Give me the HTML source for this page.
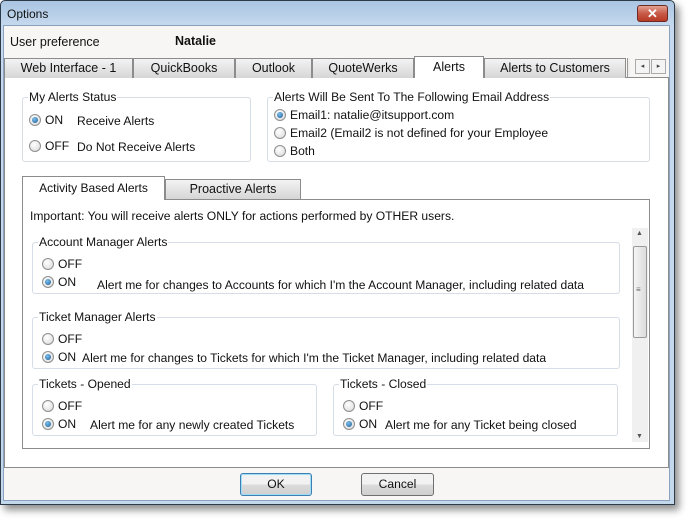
<!DOCTYPE html><html><head><style>
*{box-sizing:border-box}
body{margin:0;width:690px;height:521px;background:#fff;font-family:"Liberation Sans",sans-serif;font-size:12.1px;color:#111;position:relative;overflow:hidden}
.a{position:absolute}
.win{left:0;top:0;width:675px;height:505px;border:1px solid #2c3a4a;background:linear-gradient(#a9c4e2,#c6d9ee 25px,#c4d8ec);box-shadow:4px 5px 8px rgba(0,0,0,.45);border-radius:5px 5px 0 0}
.body{left:3px;top:25px;width:667px;height:476px;background:#f7f6f4;border:1px solid #8aa2bd}
.tab{position:absolute;height:20px;border:1px solid #8c8c8c;border-bottom:none;background:linear-gradient(#f3f3f3,#d6d6d6);text-align:center;line-height:19px;font-size:12.5px}
.panel{background:#fff;border:1px solid #8c8c8c}
.grp{position:absolute;border:1px solid #d5dde6;border-radius:3px}
.lg{position:absolute;top:-8px;left:5px;background:#fff;padding:0 1px;font-size:12.1px}
.r{position:absolute;width:12px;height:12px;border-radius:50%;border:1px solid #8e8f8f;background:radial-gradient(circle at 40% 35%,#fff,#d7d7d7)}
.r.on::after{content:"";position:absolute;left:2px;top:2px;width:6px;height:6px;border-radius:50%;background:radial-gradient(circle at 40% 35%,#7fc0ec,#165a94)}
.t{position:absolute;white-space:nowrap}
.btn{position:absolute;height:23px;border:1px solid #707070;border-radius:3px;background:linear-gradient(#f2f2f2 50%,#dcdcdc 50%,#cfcfcf);text-align:center;line-height:21px}
</style></head><body>
<div class="a win"></div>
<div class="t" style="left:7px;top:7px;font-size:12px">Options</div>
<div class="a" style="left:637px;top:5px;width:31px;height:17px;border:1px solid #6d2a22;border-radius:3px;background:linear-gradient(#e3a293,#c75a46 50%,#b83a26);color:#fff;text-align:center;font-weight:bold;line-height:15px;font-size:13px">✕</div>
<div class="a body"></div>
<div class="t" style="left:10px;top:35px;font-size:12.5px">User preference</div>
<div class="t" style="left:175px;top:34px;font-weight:bold;font-size:12.5px">Natalie</div>
<div class="a panel" style="left:4px;top:77px;width:665px;height:391px"></div>
<div class="tab" style="left:4px;top:58px;width:129px">Web Interface - 1</div>
<div class="tab" style="left:133px;top:58px;width:102px">QuickBooks</div>
<div class="tab" style="left:235px;top:58px;width:77px">Outlook</div>
<div class="tab" style="left:312px;top:58px;width:102px">QuoteWerks</div>
<div class="tab" style="left:414px;top:56px;width:70px;height:22px;background:#fff;line-height:20px">Alerts</div>
<div class="tab" style="left:484px;top:58px;width:142px">Alerts to Customers</div>
<div class="a" style="left:627px;top:58px;width:3px;height:19px;border-left:1px solid #999;background:#eee"></div>
<div class="a" style="left:635px;top:59px;width:15px;height:15px;border:1px solid #aaa;background:#f4f4f4;font-size:7px;text-align:center;line-height:13px;color:#444">◂</div>
<div class="a" style="left:651px;top:59px;width:15px;height:15px;border:1px solid #aaa;background:#f4f4f4;font-size:7px;text-align:center;line-height:13px;color:#444">▸</div>

<div class="grp" style="left:22px;top:97px;width:229px;height:65px"><span class="lg">My Alerts Status</span></div>
<div class="r on" style="left:29px;top:114px"></div><div class="t" style="left:45px;top:113px">ON</div><div class="t" style="left:77px;top:114px">Receive Alerts</div>
<div class="r" style="left:29px;top:140px"></div><div class="t" style="left:45px;top:139px">OFF</div><div class="t" style="left:77px;top:140px">Do Not Receive Alerts</div>

<div class="grp" style="left:267px;top:97px;width:383px;height:65px"><span class="lg">Alerts Will Be Sent To The Following Email Address</span></div>
<div class="r on" style="left:274px;top:109px"></div><div class="t" style="left:290px;top:108px">Email1: natalie@itsupport.com</div>
<div class="r" style="left:274px;top:127px"></div><div class="t" style="left:290px;top:126px">Email2 (Email2 is not defined for your Employee</div>
<div class="r" style="left:274px;top:145px"></div><div class="t" style="left:290px;top:144px">Both</div>

<div class="a panel" style="left:22px;top:199px;width:628px;height:250px"></div>
<div class="tab" style="left:22px;top:176px;width:143px;height:24px;background:#fff;line-height:22px;font-size:12px">Activity Based Alerts</div>
<div class="tab" style="left:165px;top:179px;width:136px">Proactive Alerts</div>
<div class="t" style="left:30px;top:209px">Important: You will receive alerts ONLY for actions performed by OTHER users.</div>

<div class="a" style="left:632px;top:228px;width:16px;height:214px;background:#f0f0f0"></div>
<div class="t" style="left:636px;top:230px;font-size:7px;color:#555">▲</div>
<div class="a" style="left:633px;top:246px;width:14px;height:92px;border:1px solid #9a9a9a;border-radius:2px;background:linear-gradient(90deg,#f4f4f4,#dcdcdc)"></div>
<div class="t" style="left:636px;top:285px;font-size:8px;color:#666">≡</div>
<div class="t" style="left:636px;top:433px;font-size:7px;color:#555">▼</div>

<div class="grp" style="left:32px;top:242px;width:588px;height:52px"><span class="lg">Account Manager Alerts</span></div>
<div class="r" style="left:42px;top:258px"></div><div class="t" style="left:58px;top:257px">OFF</div>
<div class="r on" style="left:42px;top:276px"></div><div class="t" style="left:58px;top:275px">ON</div>
<div class="t" style="left:97px;top:278px">Alert me for changes to Accounts for which I'm the Account Manager, including related data</div>

<div class="grp" style="left:32px;top:317px;width:588px;height:52px"><span class="lg">Ticket Manager Alerts</span></div>
<div class="r" style="left:42px;top:333px"></div><div class="t" style="left:58px;top:332px">OFF</div>
<div class="r on" style="left:42px;top:351px"></div><div class="t" style="left:58px;top:350px">ON</div>
<div class="t" style="left:82px;top:351px">Alert me for changes to Tickets for which I'm the Ticket Manager, including related data</div>

<div class="grp" style="left:32px;top:384px;width:285px;height:52px"><span class="lg">Tickets - Opened</span></div>
<div class="r" style="left:42px;top:400px"></div><div class="t" style="left:58px;top:399px">OFF</div>
<div class="r on" style="left:42px;top:418px"></div><div class="t" style="left:58px;top:417px">ON</div>
<div class="t" style="left:90px;top:418px">Alert me for any newly created Tickets</div>

<div class="grp" style="left:333px;top:384px;width:285px;height:52px"><span class="lg">Tickets - Closed</span></div>
<div class="r" style="left:343px;top:400px"></div><div class="t" style="left:359px;top:399px">OFF</div>
<div class="r on" style="left:343px;top:418px"></div><div class="t" style="left:359px;top:417px">ON</div>
<div class="t" style="left:385px;top:418px">Alert me for any Ticket being closed</div>

<div class="btn" style="left:240px;top:473px;width:72px;border-color:#3c7fb1;box-shadow:inset 0 0 0 1px #9fdcf8">OK</div>
<div class="btn" style="left:361px;top:473px;width:73px">Cancel</div>
</body></html>
